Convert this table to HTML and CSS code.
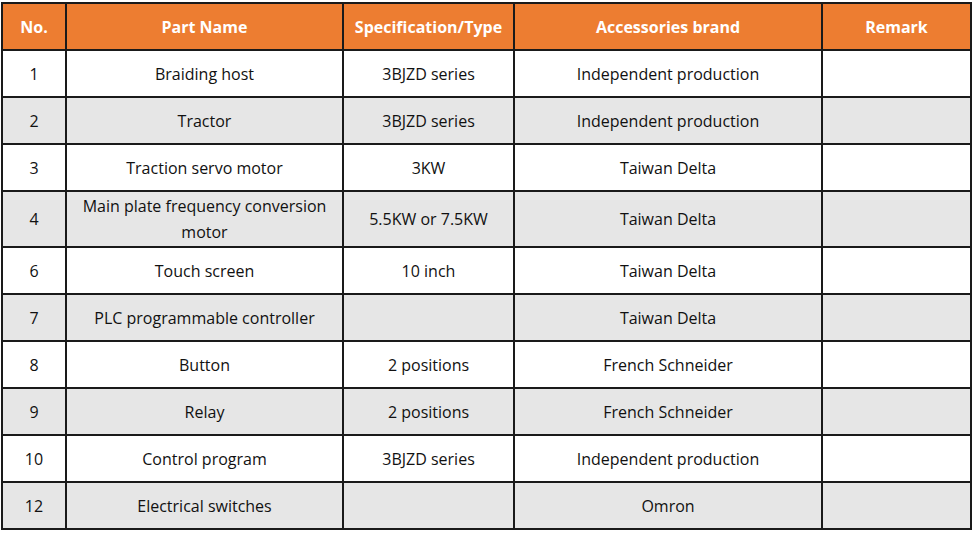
FILE: index.html
```html
<!DOCTYPE html>
<html>
<head>
<meta charset="utf-8">
<link rel="stylesheet" href="styles.css">
</head>
<body>
<div class="wrap">
<table class="parts">
  <colgroup>
    <col class="c-no"><col class="c-name"><col class="c-spec"><col class="c-brand"><col class="c-remark">
  </colgroup>
  <thead>
    <tr><th>No.</th><th>Part Name</th><th>Specification/Type</th><th>Accessories brand</th><th>Remark</th></tr>
  </thead>
  <tbody>
    <tr><td>1</td><td>Braiding host</td><td>3BJZD series</td><td>Independent production</td><td></td></tr>
    <tr class="alt"><td>2</td><td>Tractor</td><td>3BJZD series</td><td>Independent production</td><td></td></tr>
    <tr><td>3</td><td>Traction servo motor</td><td>3KW</td><td>Taiwan Delta</td><td></td></tr>
    <tr class="alt tall"><td>4</td><td>Main plate frequency conversion motor</td><td>5.5KW or 7.5KW</td><td>Taiwan Delta</td><td></td></tr>
    <tr><td>6</td><td>Touch screen</td><td>10 inch</td><td>Taiwan Delta</td><td></td></tr>
    <tr class="alt"><td>7</td><td>PLC programmable controller</td><td></td><td>Taiwan Delta</td><td></td></tr>
    <tr><td>8</td><td>Button</td><td>2 positions</td><td>French Schneider</td><td></td></tr>
    <tr class="alt"><td>9</td><td>Relay</td><td>2 positions</td><td>French Schneider</td><td></td></tr>
    <tr><td>10</td><td>Control program</td><td>3BJZD series</td><td>Independent production</td><td></td></tr>
    <tr class="alt"><td>12</td><td>Electrical switches</td><td></td><td>Omron</td><td></td></tr>
  </tbody>
</table>
</div>
</body>
</html>
```
FILE: styles.css
```css
html, body {
  margin: 0;
  padding: 0;
  background: #ffffff;
}
.wrap {
  padding: 2px 0 0 1px;
}
.parts {
  border-collapse: collapse;
  table-layout: fixed;
  width: 971px;
  font-family: "Open Sans", "Noto Sans", sans-serif;
  font-size: 16px;
  color: #111111;
}
.c-no { width: 64px; }
.c-name { width: 277px; }
.c-spec { width: 171px; }
.c-brand { width: 308px; }
.c-remark { width: 149px; }
.parts th, .parts td {
  border: 2px solid #1a1a1a;
  text-align: center;
  vertical-align: middle;
  padding: 0 8px;
  line-height: 26px;
  height: 45px;
  box-sizing: border-box;
}
.parts th {
  background: #ed7d31;
  color: #ffffff;
  font-weight: 700;
}
.parts tr.alt td {
  background: #e6e6e6;
}
.parts tr.tall td {
  height: 56px;
}
.parts tbody tr {
  height: 47px;
}
.parts thead tr {
  height: 47px;
}
```
